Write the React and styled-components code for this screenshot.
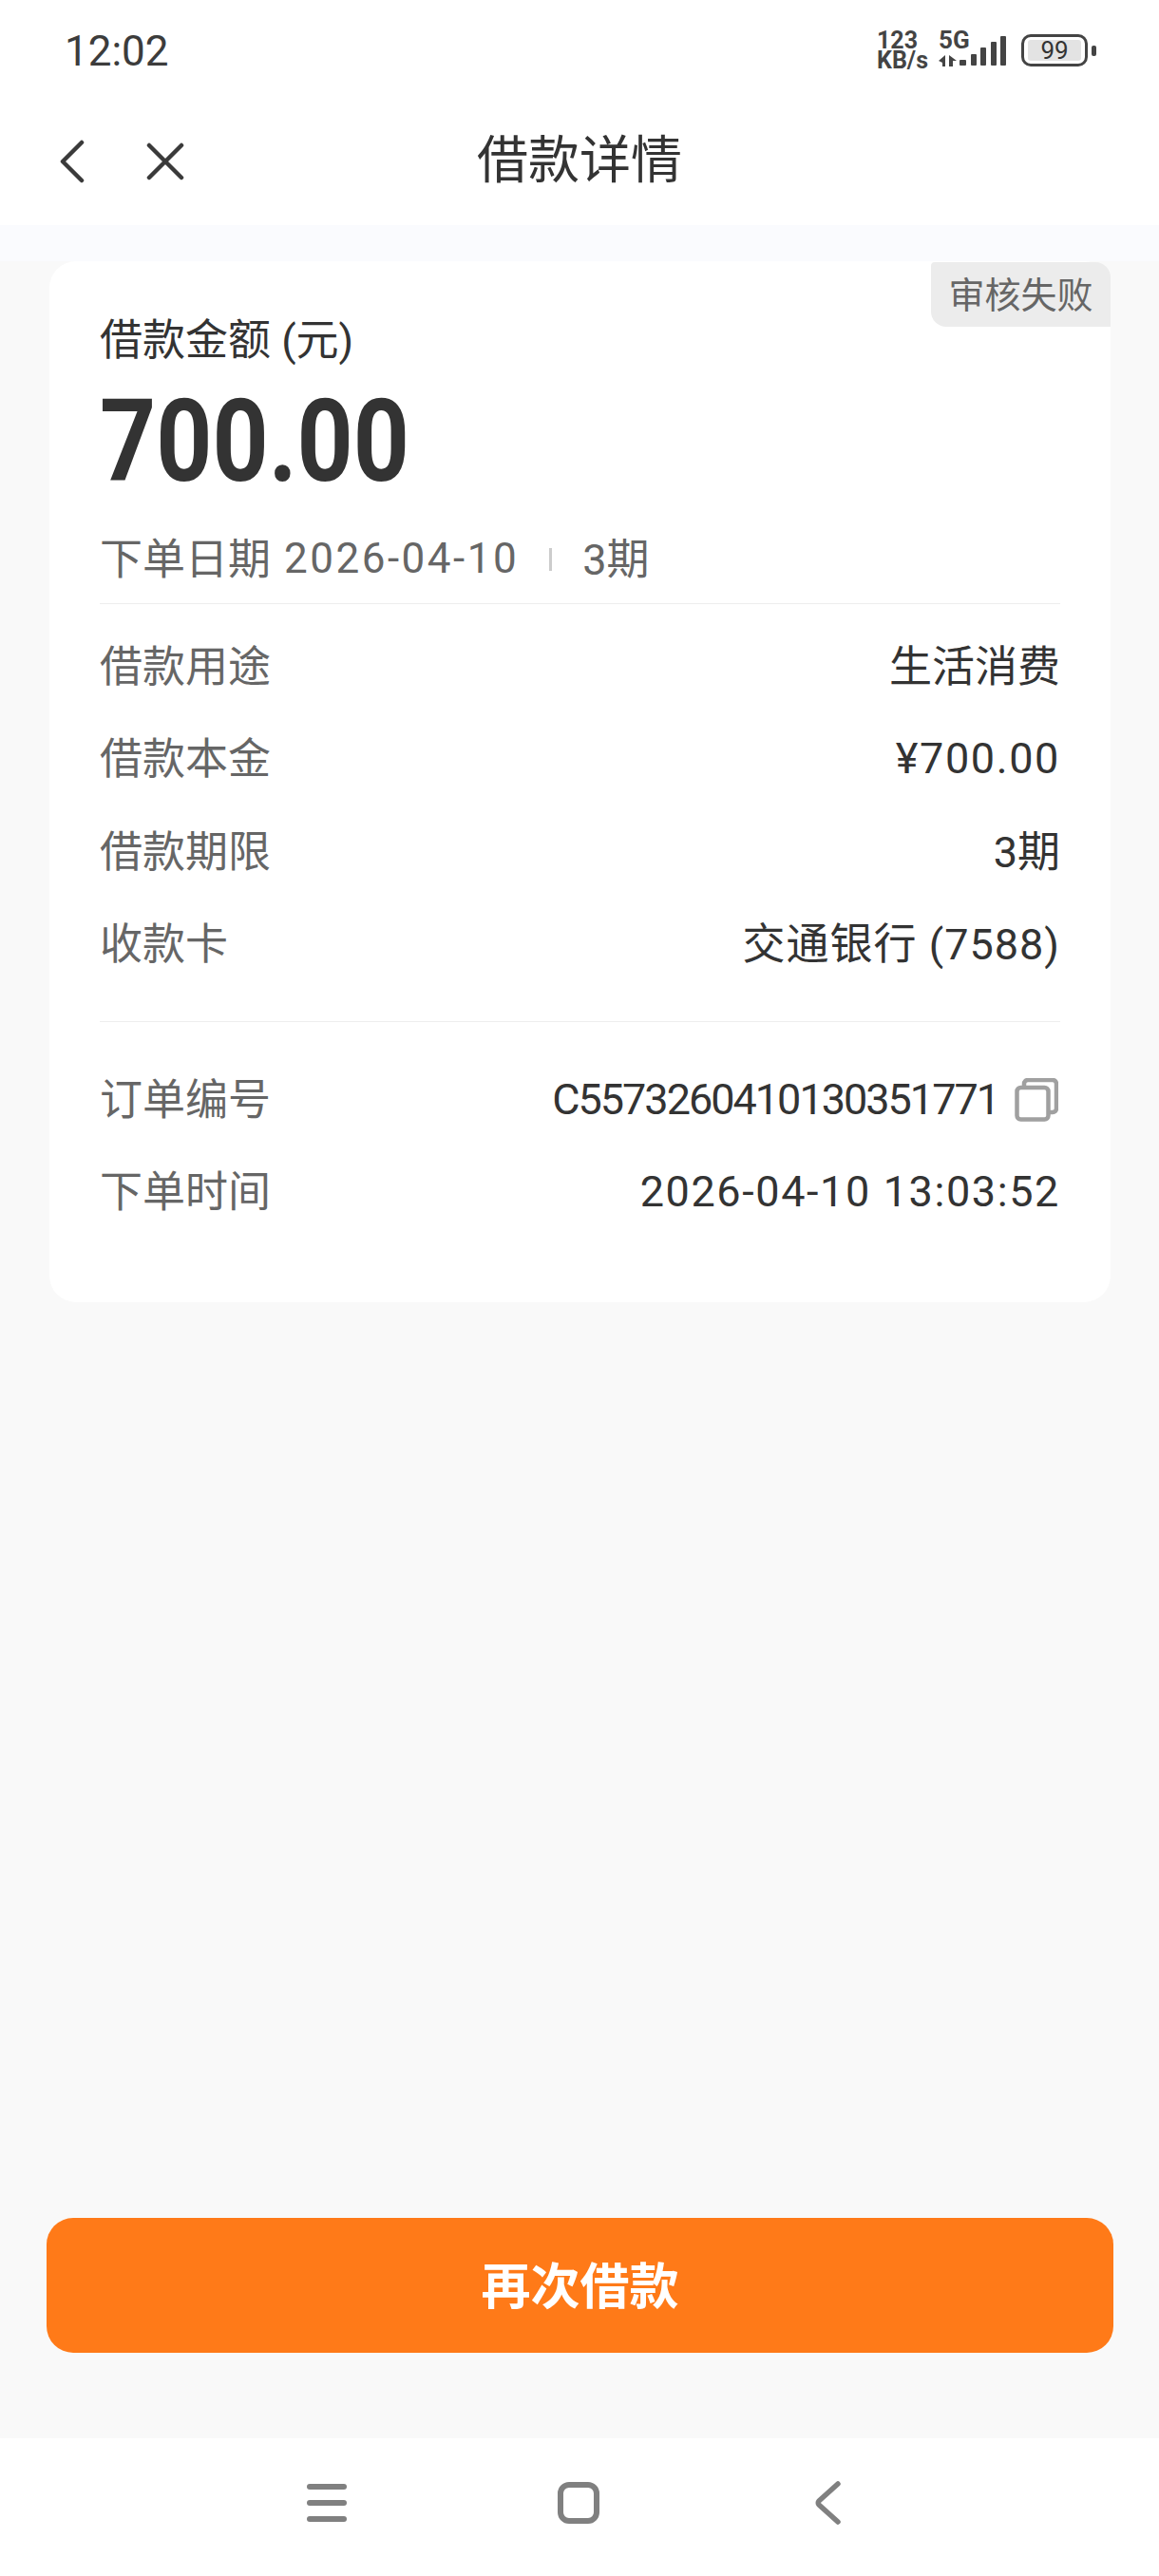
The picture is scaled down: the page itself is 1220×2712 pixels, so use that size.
import React from 'react';
import styled, { createGlobalStyle } from 'styled-components';

const GlobalStyle = createGlobalStyle`
  html, body {
    margin: 0;
    padding: 0;
    background: #f9f9f9;
  }
  * {
    box-sizing: border-box;
  }
`;

const FONT = 'Roboto, "Noto Sans CJK SC", sans-serif';

const Page = styled.div`
  width: 1220px;
  height: 2712px;
  display: flex;
  flex-direction: column;
  background: #f9f9f9;
  font-family: ${FONT};
  color: #333;
`;

const StatusBar = styled.div`
  height: 100px;
  background: #fff;
  display: flex;
  align-items: flex-start;
  justify-content: space-between;
  padding: 27px 75px 0 68px;
`;

const Time = styled.div`
  font-size: 44px;
  line-height: 54px;
  color: #3c3c3c;
`;

const StatusIcons = styled.div`
  display: flex;
  align-items: flex-start;
`;

const Speed = styled.div`
  margin-top: 5px;
  width: 69px;
  font-size: 25px;
  line-height: 21px;
  font-weight: 700;
  color: #444;
`;

const Network = styled.div`
  position: relative;
  width: 83px;
  height: 42px;
  margin-top: 5px;

  svg {
    display: block;
    overflow: visible;
  }
`;

const NetworkLabel = styled.span`
  position: absolute;
  left: -4px;
  top: -2px;
  font-size: 26px;
  line-height: 24px;
  font-weight: 700;
  color: #444;
`;

const Battery = styled.div`
  width: 70px;
  height: 34px;
  margin-top: 9px;
  border: 3px solid #444;
  border-radius: 10px;
  padding: 3px 4px;
  position: relative;
`;

const BatteryLevel = styled.div`
  height: 100%;
  border-radius: 3px;
  background: #e3e3e3;
  display: flex;
  align-items: center;
  justify-content: center;
  font-size: 26px;
  line-height: 1;
  color: #333;
`;

const BatteryCap = styled.span`
  position: absolute;
  right: -12px;
  top: 9px;
  width: 5px;
  height: 11px;
  border-radius: 2px;
  background: #444;
`;

const Header = styled.header`
  height: 137px;
  background: #fff;
  display: grid;
  grid-template-columns: 1fr auto 1fr;
  align-items: center;
  padding: 2px 0 0 62px;
`;

const HeaderIcons = styled.div`
  display: flex;
  align-items: center;
  gap: 65px;
`;

const Title = styled.h1`
  margin: 0;
  font-size: 54px;
  line-height: 70px;
  font-weight: 400;
  color: #333;
  transform: translateX(-31px);
`;

const Band = styled.div`
  height: 38px;
  background: #fafbfe;
`;

const Main = styled.main`
  flex: 1;
  display: flex;
  flex-direction: column;
  padding: 0 48px 90px 49px;
`;

const Card = styled.section`
  position: relative;
  margin: 0 3px;
  padding: 54px 53px 87px 53px;
  background: #fff;
  border-radius: 28px;
`;

const Badge = styled.div`
  position: absolute;
  top: 1px;
  right: 0;
  width: 189px;
  height: 68px;
  padding-bottom: 5px;
  display: flex;
  align-items: center;
  justify-content: center;
  background: #ececec;
  border-radius: 4px 16px 0 16px;
  font-size: 38px;
  color: #666;
`;

const AmountLabel = styled.div`
  font-size: 45px;
  line-height: 60px;
  color: #333;
`;

const Amount = styled.div`
  margin-top: 16px;
  font-size: 120px;
  line-height: 120px;
  font-weight: 700;
  color: #333;
  transform: scaleX(0.86);
  transform-origin: left center;
`;

const Meta = styled.div`
  margin-top: 33px;
  height: 60px;
  display: flex;
  align-items: center;
  font-size: 45px;
  color: #666;
`;

const MetaLabel = styled.span`
  padding-bottom: 6px;
`;

const MetaDate = styled.span`
  margin-left: 14px;
  font-size: 44px;
  letter-spacing: 2.5px;
`;

const MetaDivider = styled.span`
  width: 3px;
  height: 24px;
  margin: 2px 32px 0;
  background: #ccc;
`;

const Divider = styled.div`
  margin-top: ${(p) => p.$top}px;
  height: 1px;
  background: #eeeeee;
`;

const Rows = styled.div`
  margin-top: ${(p) => p.$top}px;
  display: flex;
  flex-direction: column;
  gap: ${(p) => p.$gap}px;
`;

const Row = styled.div`
  display: flex;
  justify-content: space-between;
  align-items: center;
  height: 60px;
  font-size: 45px;
`;

const Label = styled.span`
  padding-bottom: 6px;
  color: #666;
`;

const Value = styled.span`
  display: flex;
  align-items: center;
  padding-bottom: ${(p) => (p.$cjk ? 6 : 0)}px;
  color: #333;
  letter-spacing: ${(p) => p.$spacing ?? 0}px;
`;

const CopyIcon = styled.svg`
  margin-left: 17px;
  margin-right: 2px;
`;

const Actions = styled.div`
  margin-top: auto;
`;

const PrimaryButton = styled.button`
  display: block;
  width: 100%;
  height: 142px;
  padding: 0 0 6px;
  border: none;
  border-radius: 28px;
  background: #ff7a18;
  color: #fff;
  font-family: ${FONT};
  font-size: 52px;
  font-weight: 700;
`;

const NavBar = styled.nav`
  height: 145px;
  background: #fff;
  display: grid;
  grid-template-columns: repeat(3, 264.5px);
  justify-content: center;
  align-items: center;
  justify-items: center;
  padding: 0 3px 10px 0;
`;

const BackKey = styled.svg`
  margin-right: 4px;
`;

const rows = [
  { label: '借款用途', value: '生活消费', cjk: true },
  { label: '借款本金', value: '¥700.00', spacing: 1.6 },
  { label: '借款期限', value: '3期', cjk: true },
  { label: '收款卡', value: '交通银行 (7588)', cjk: true, spacing: 1 },
];

const App = () => (
  <Page>
    <GlobalStyle />
    <StatusBar>
      <Time>12:02</Time>
      <StatusIcons>
        <Speed>
          123
          <br />
          KB/s
        </Speed>
        <Network>
          <NetworkLabel>5G</NetworkLabel>
          <svg width="83" height="42" viewBox="0 0 83 42" fill="#444">
            <path d="M-4 32 3 26V38H0V34z" />
            <path d="M7 26V38h4V32h4z" />
            <rect x="18" y="31" width="7" height="6" rx="1" />
            <rect x="30" y="25" width="6" height="12" rx="1" />
            <rect x="40" y="18" width="6" height="19" rx="1" />
            <rect x="51" y="12" width="6" height="25" rx="1" />
            <rect x="61" y="6" width="6" height="31" rx="1" />
          </svg>
        </Network>
        <Battery>
          <BatteryLevel>99</BatteryLevel>
          <BatteryCap />
        </Battery>
      </StatusIcons>
    </StatusBar>

    <Header>
      <HeaderIcons>
        <svg width="27" height="46" viewBox="0 0 27 46" fill="none" stroke="#3a3a3a" strokeWidth="4.5" strokeLinecap="round" strokeLinejoin="round">
          <path d="M24 3 4 23l20 20" />
        </svg>
        <svg width="40" height="40" viewBox="0 0 40 40" fill="none" stroke="#3a3a3a" strokeWidth="4.5" strokeLinecap="round">
          <path d="M3 3l34 34M37 3 3 37" />
        </svg>
      </HeaderIcons>
      <Title>借款详情</Title>
    </Header>
    <Band />

    <Main>
      <Card>
        <Badge>审核失败</Badge>
        <AmountLabel>借款金额 (元)</AmountLabel>
        <Amount>700.00</Amount>
        <Meta>
          <MetaLabel>下单日期</MetaLabel>
          <MetaDate>2026-04-10</MetaDate>
          <MetaDivider />
          <MetaLabel>3期</MetaLabel>
        </Meta>
        <Divider $top={17} />
        <Rows $top={35} $gap={37.5}>
          {rows.map((row) => (
            <Row key={row.label}>
              <Label>{row.label}</Label>
              <Value $cjk={row.cjk} $spacing={row.spacing}>{row.value}</Value>
            </Row>
          ))}
        </Rows>
        <Divider $top={51} />
        <Rows $top={52} $gap={36.5}>
          <Row>
            <Label>订单编号</Label>
            <Value $spacing={-2}>
              C5573260410130351771
              <CopyIcon width="46" height="46" viewBox="0 0 46 46" fill="none" stroke="#a0a0a0" strokeWidth="4.5" strokeLinejoin="round">
                <rect x="2.5" y="10" width="33" height="33.5" rx="4" />
                <path d="M10 10V6a4 4 0 0 1 4-4h26a4 4 0 0 1 4 4v26a4 4 0 0 1-4 4h-4" />
              </CopyIcon>
            </Value>
          </Row>
          <Row>
            <Label>下单时间</Label>
            <Value $spacing={1.6}>2026-04-10 13:03:52</Value>
          </Row>
        </Rows>
      </Card>
      <Actions>
        <PrimaryButton type="button">再次借款</PrimaryButton>
      </Actions>
    </Main>

    <NavBar>
      <svg width="44" height="40" viewBox="0 0 44 40" fill="#808080">
        <rect x="1" y="0" width="42" height="6" rx="3" />
        <rect x="1" y="17" width="42" height="6" rx="3" />
        <rect x="1" y="34" width="42" height="6" rx="3" />
      </svg>
      <svg width="46" height="46" viewBox="0 0 46 46" fill="none" stroke="#808080" strokeWidth="6">
        <rect x="4" y="4" width="38" height="38" rx="9" />
      </svg>
      <BackKey width="30" height="46" viewBox="0 0 30 46" fill="none" stroke="#808080" strokeWidth="5.5" strokeLinecap="round" strokeLinejoin="round">
        <path d="M26 3 6 21a3 3 0 0 0 0 4l20 18" />
      </BackKey>
    </NavBar>
  </Page>
);

export default App;
